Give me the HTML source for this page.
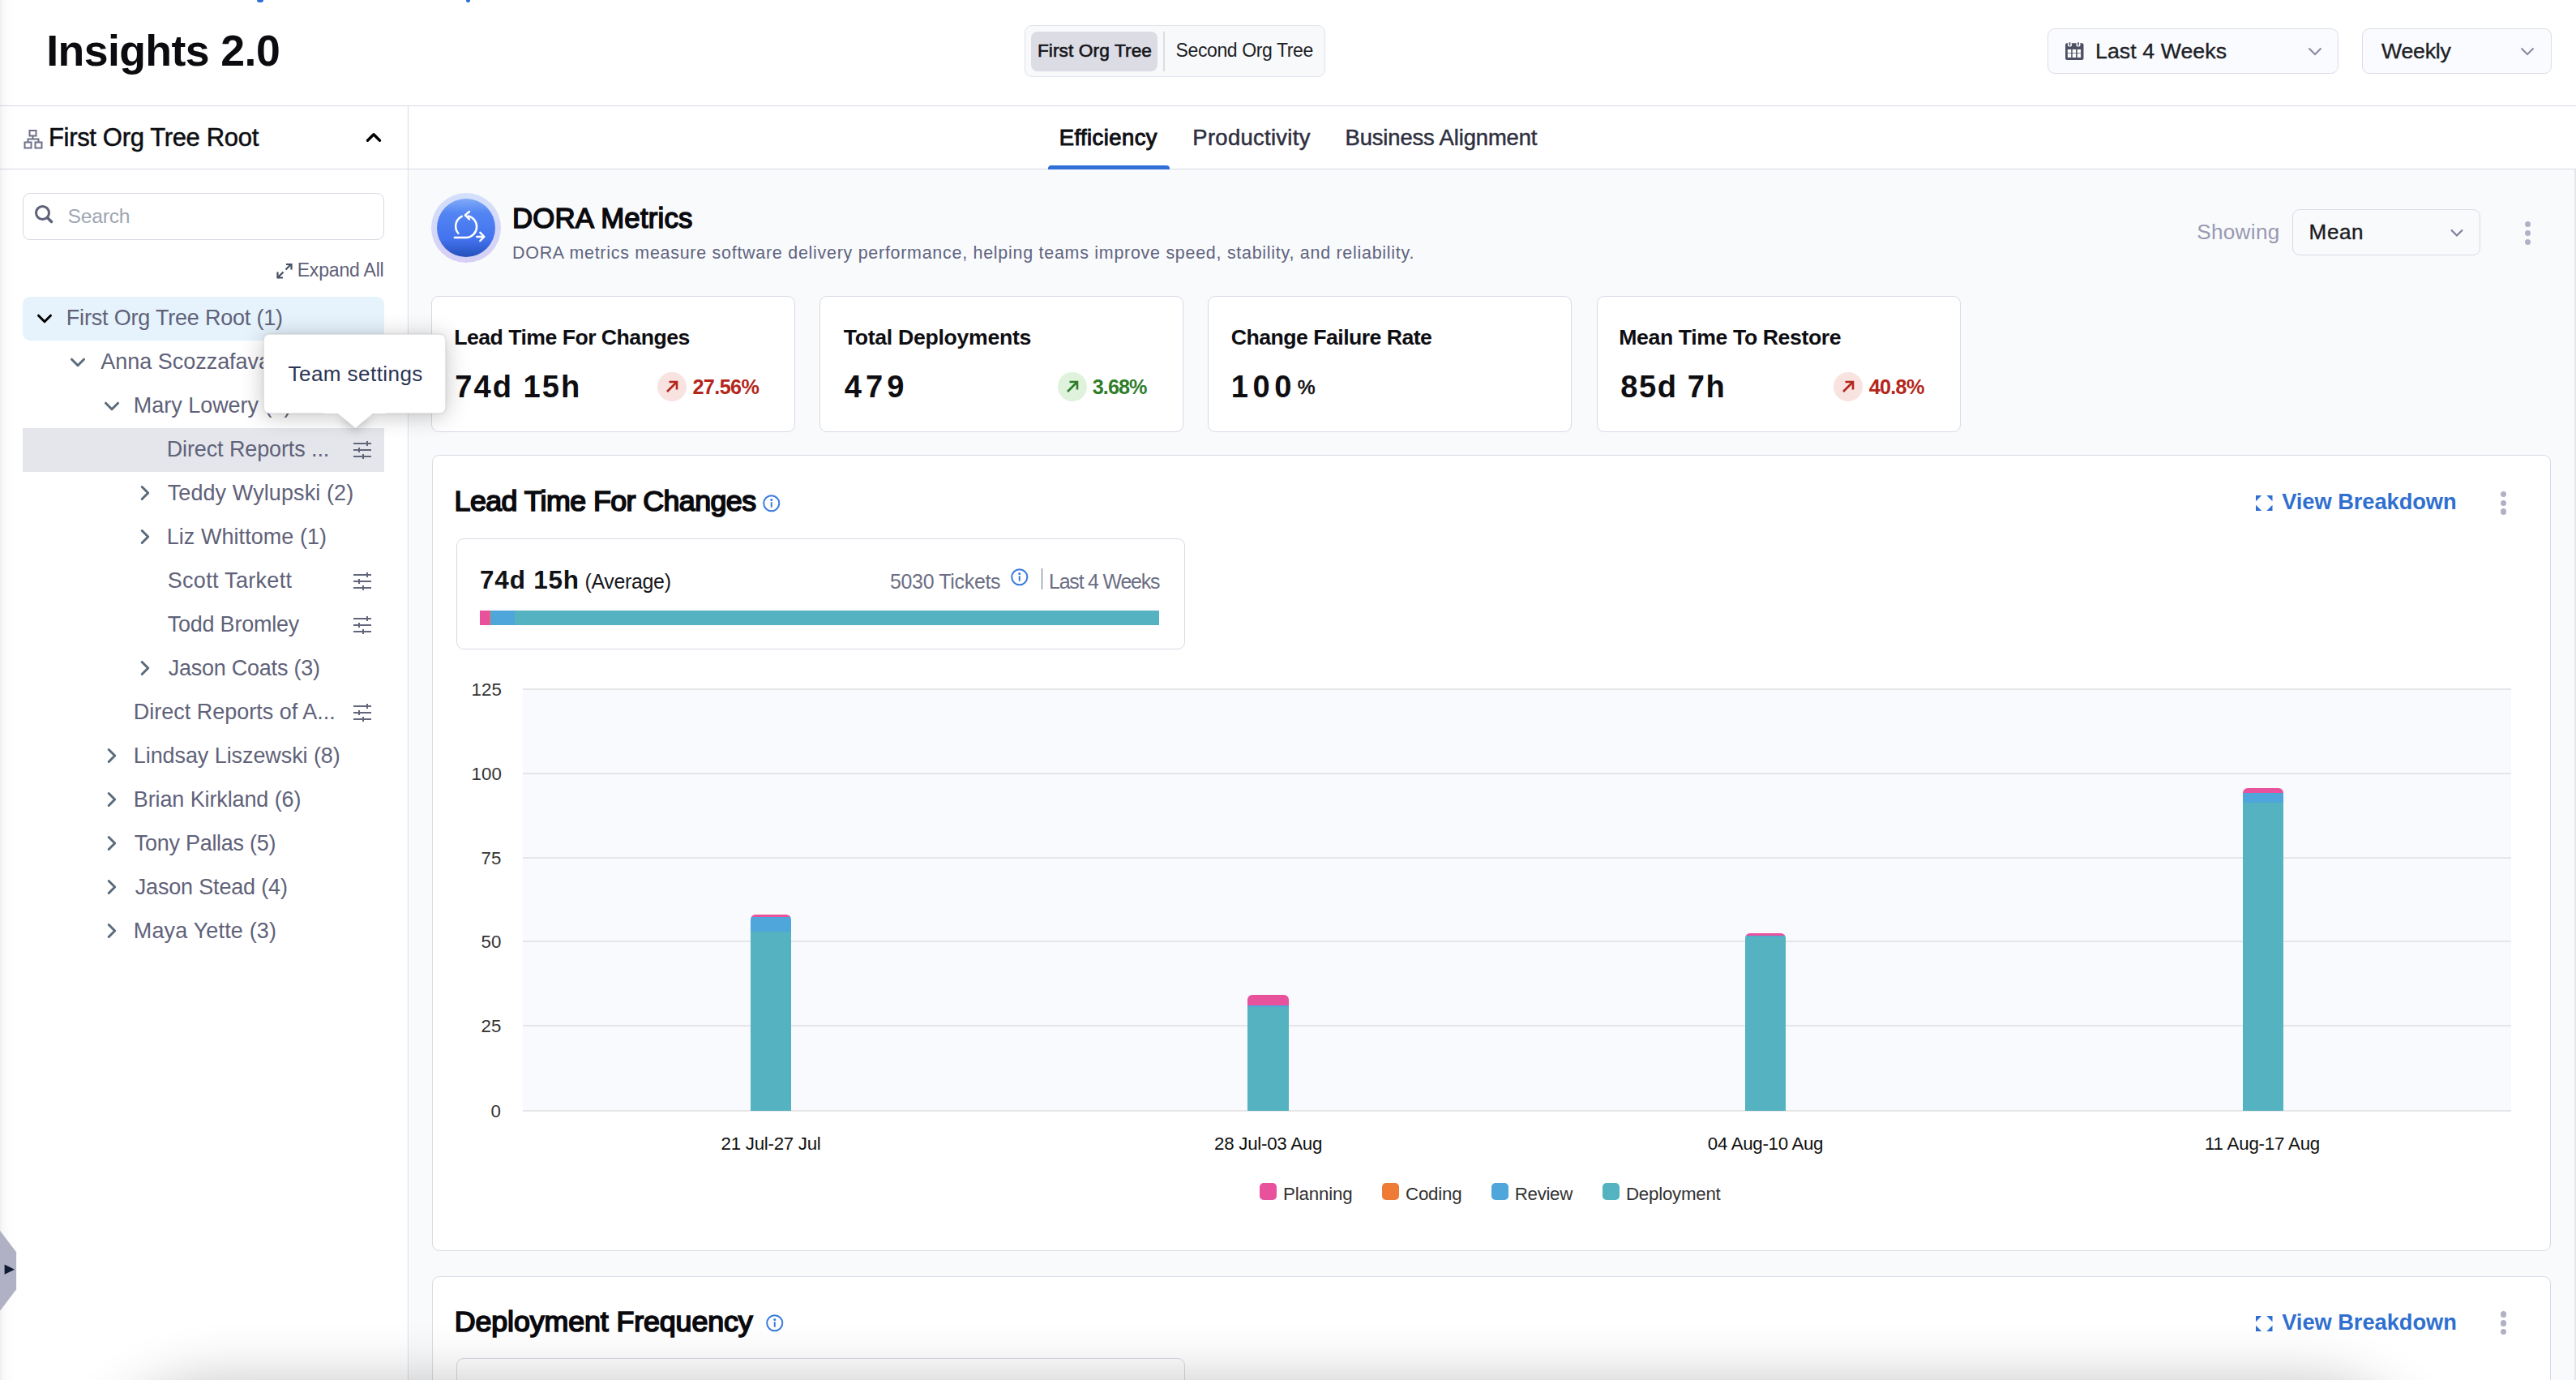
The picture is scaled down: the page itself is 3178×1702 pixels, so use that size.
<!DOCTYPE html>
<html><head><meta charset="utf-8"><style>
html,body{margin:0;padding:0;}
body{width:3178px;height:1702px;overflow:hidden;position:relative;font-family:"Liberation Sans",sans-serif;background:#fff;}
#r>div,#r>span,#r>svg{position:absolute;}
#r span{white-space:nowrap;line-height:1;}
#r svg{overflow:visible;}
</style></head><body><div id="r">
<div style="left:0.00px;top:0.00px;width:3178.00px;height:1702.00px;background:#fff"></div>
<div style="left:505.00px;top:209.00px;width:2673.00px;height:1493.00px;background:#f9fafc"></div>
<div style="left:0.00px;top:129.60px;width:3178.00px;height:1.20px;background:#d9dae5"></div>
<div style="left:0.00px;top:207.80px;width:505.00px;height:1.20px;background:#d9dae5"></div>
<div style="left:505.00px;top:207.80px;width:2673.00px;height:1.20px;background:#d9dae5"></div>
<div style="left:502.90px;top:131.00px;width:1.20px;height:1571.00px;background:#d9dae5"></div>
<div style="left:3176.00px;top:209.00px;width:2.00px;height:1493.00px;background:#e6e6eb"></div>
<span style="left:57.20px;top:36.00px;font-size:53.62px;color:#0c0c10;font-weight:bold;letter-spacing:-0.582px;">Insights 2.0</span>
<div style="left:317.00px;top:0.00px;width:8.00px;height:3.00px;background:#2e6fd6;border-radius:0 0 4px 4px"></div>
<div style="left:575.00px;top:0.00px;width:5.00px;height:3.00px;background:#2e6fd6;border-radius:0 0 3px 3px"></div>
<div style="left:1264.00px;top:31.40px;width:371.00px;height:64.00px;box-sizing:border-box;border:1px solid #e1e2ea;border-radius:9px;background:#f8f9fb"></div>
<div style="left:1272.00px;top:39.00px;width:155.60px;height:48.60px;background:#dcdce5;border-radius:8px"></div>
<div style="left:1434.50px;top:39.00px;width:2.00px;height:48.60px;background:#dcdde4"></div>
<span style="left:1279.90px;top:50.90px;font-size:22.75px;color:#15161a;letter-spacing:0.062px;-webkit-text-stroke:0.6px #15161a;">First Org Tree</span>
<span style="left:1450.60px;top:50.90px;font-size:23.04px;color:#1d1f26;letter-spacing:-0.414px;">Second Org Tree</span>
<span style="left:1306.70px;top:156.10px;font-size:27.39px;color:#0f1013;letter-spacing:0.467px;-webkit-text-stroke:1.0px #0f1013;">Efficiency</span>
<span style="left:1471.30px;top:156.10px;font-size:27.39px;color:#2e3040;letter-spacing:0.327px;-webkit-text-stroke:0.5px #2e3040;">Productivity</span>
<span style="left:1659.50px;top:156.10px;font-size:27.39px;color:#2e3040;letter-spacing:-0.118px;-webkit-text-stroke:0.5px #2e3040;">Business Alignment</span>
<div style="left:1293.20px;top:204.00px;width:149.50px;height:5.00px;background:#2f6fd6;border-radius:4px 4px 0 0"></div>
<div style="left:2526.00px;top:35.30px;width:359.00px;height:56.00px;box-sizing:border-box;border:1px solid #dcdde7;border-radius:9px;background:#fafbfe"></div>
<svg style="left:2546.00px;top:50.00px;" width="26" height="26" viewBox="0 0 26 26"><rect x="2" y="3.3" width="22.5" height="20.6" rx="2" fill="#4d5062"/><rect x="4.8" y="10.9" width="4.4" height="4.4" fill="#fff"/><rect x="10.7" y="10.9" width="4.4" height="4.4" fill="#fff"/><rect x="16.7" y="10.9" width="4.4" height="4.4" fill="#fff"/><rect x="4.8" y="16" width="4.4" height="4.9" fill="#fff"/><rect x="10.7" y="16" width="4.4" height="4.9" fill="#fff"/><rect x="16.7" y="16" width="4.4" height="4.9" fill="#fff"/><circle cx="7.5" cy="5" r="2.6" fill="#fafbfe"/><circle cx="18" cy="5" r="2.6" fill="#fafbfe"/><rect x="6.7" y="2" width="1.6" height="4.5" rx="0.8" fill="#4d5062"/><rect x="17.2" y="2" width="1.6" height="4.5" rx="0.8" fill="#4d5062"/></svg>
<span style="left:2585.00px;top:50.00px;font-size:26.67px;color:#1e1f26;letter-spacing:0.091px;-webkit-text-stroke:0.4px #1e1f26;">Last 4 Weeks</span>
<svg style="left:2846.00px;top:56.00px;" width="20" height="14" viewBox="0 0 20 14"><path d="M2.5 3.5 L10 11 L17.5 3.5" fill="none" stroke="#8b8ca6" stroke-width="2.2"/></svg>
<div style="left:2914.00px;top:35.30px;width:233.60px;height:56.00px;box-sizing:border-box;border:1px solid #dcdde7;border-radius:9px;background:#fafbfe"></div>
<span style="left:2938.00px;top:50.00px;font-size:26.67px;color:#1e1f26;letter-spacing:-0.200px;-webkit-text-stroke:0.4px #1e1f26;">Weekly</span>
<svg style="left:3108.00px;top:56.00px;" width="20" height="14" viewBox="0 0 20 14"><path d="M2.5 3.5 L10 11 L17.5 3.5" fill="none" stroke="#8b8ca6" stroke-width="2.2"/></svg>
<div style="left:0.00px;top:0.00px;width:20.00px;height:1702.00px;background:linear-gradient(to right, rgba(0,0,0,0.065), rgba(0,0,0,0.035) 12%, rgba(0,0,0,0.015) 40%, rgba(0,0,0,0.004) 75%, rgba(0,0,0,0))"></div>
<svg style="left:28.00px;top:159.00px;" width="26" height="26" viewBox="0 0 26 26"><g fill="none" stroke="#6e7088" stroke-width="2"><rect x="8.5" y="2" width="8" height="6.5"/><rect x="2.5" y="16.5" width="8" height="7"/><rect x="15.5" y="16.5" width="8" height="7"/><path d="M12.5 8.5V12.5M6.5 16.5V12.5H19.5V16.5"/></g></svg>
<span style="left:60.00px;top:154.40px;font-size:31.01px;color:#0d0e12;letter-spacing:-0.333px;-webkit-text-stroke:0.5px #0d0e12;">First Org Tree Root</span>
<svg style="left:449.70px;top:161.00px;" width="22" height="16" viewBox="0 0 22 16"><path d="M3.5 12.3 L11 4.8 L18.5 12.3" fill="none" stroke="#000" stroke-width="3.4" stroke-linecap="round" stroke-linejoin="round"/></svg>
<div style="left:28.40px;top:238.20px;width:445.20px;height:57.40px;box-sizing:border-box;border:1px solid #d8d9e3;border-radius:9px;background:#fff"></div>
<svg style="left:40.00px;top:250.00px;" width="28" height="28" viewBox="0 0 28 28"><circle cx="12.5" cy="12.5" r="8" fill="none" stroke="#5e6178" stroke-width="3"/><path d="M18.5 18.5 L23.5 23.5" stroke="#5e6178" stroke-width="3.5" stroke-linecap="round"/></svg>
<span style="left:83.60px;top:254.70px;font-size:24.64px;color:#9fa6b3;letter-spacing:-0.240px;">Search</span>
<svg style="left:340.00px;top:323.00px;" width="22" height="22" viewBox="0 0 22 22"><g fill="none" stroke="#434e60" stroke-width="2.2"><path d="M12.5 9.5 L19 3"/><path d="M13 3 H19.5 V9.5"/><path d="M9.5 12.5 L3 19"/><path d="M2.5 12.5 V19.5 H9"/></g></svg>
<span style="left:366.70px;top:321.90px;font-size:23.04px;color:#5e6178;letter-spacing:-0.200px;">Expand All</span>
<div style="left:28.00px;top:366.00px;width:446.00px;height:54.00px;background:#e6f3fc;border-radius:9px"></div>
<div style="left:28.00px;top:528.00px;width:446.00px;height:54.00px;background:#e4e6ec"></div>
<span style="left:81.80px;top:379.00px;font-size:26.96px;color:#5f6279;letter-spacing:-0.173px;">First Org Tree Root (1)</span>
<svg style="left:43.00px;top:385.20px;" width="24" height="16" viewBox="0 0 24 16"><path d="M4.5 4.2 L12 11.7 L19.5 4.2" fill="none" stroke="#000" stroke-width="3" stroke-linecap="round" stroke-linejoin="round"/></svg>
<span style="left:124.30px;top:433.00px;font-size:26.96px;color:#5f6279;">Anna Scozzafava (7)</span>
<svg style="left:83.50px;top:439.20px;" width="24" height="16" viewBox="0 0 24 16"><path d="M4.5 4.2 L12 11.7 L19.5 4.2" fill="none" stroke="#5b6b7b" stroke-width="3" stroke-linecap="round" stroke-linejoin="round"/></svg>
<span style="left:164.80px;top:487.00px;font-size:26.96px;color:#5f6279;">Mary Lowery (6)</span>
<svg style="left:126.00px;top:493.20px;" width="24" height="16" viewBox="0 0 24 16"><path d="M4.5 4.2 L12 11.7 L19.5 4.2" fill="none" stroke="#5b6b7b" stroke-width="3" stroke-linecap="round" stroke-linejoin="round"/></svg>
<span style="left:205.70px;top:541.00px;font-size:26.96px;color:#5f6279;letter-spacing:-0.094px;">Direct Reports ...</span>
<svg style="left:434.00px;top:543.80px;" width="26" height="24" viewBox="0 0 26 24"><g stroke="#62667a" stroke-width="2"><path d="M2 3H24M2 11H24M2 19H24"/><path d="M19 0V6M9 8V14M14 16V22"/></g></svg>
<span style="left:206.70px;top:595.00px;font-size:26.96px;color:#5f6279;letter-spacing:0.118px;">Teddy Wylupski (2)</span>
<svg style="left:170.90px;top:596.30px;" width="16" height="24" viewBox="0 0 16 24"><path d="M4.2 4.5 L11.7 12 L4.2 19.5" fill="none" stroke="#5b6b7b" stroke-width="3" stroke-linecap="round" stroke-linejoin="round"/></svg>
<span style="left:205.70px;top:649.00px;font-size:26.96px;color:#5f6279;letter-spacing:0.080px;">Liz Whittome (1)</span>
<svg style="left:170.90px;top:650.30px;" width="16" height="24" viewBox="0 0 16 24"><path d="M4.2 4.5 L11.7 12 L4.2 19.5" fill="none" stroke="#5b6b7b" stroke-width="3" stroke-linecap="round" stroke-linejoin="round"/></svg>
<span style="left:206.70px;top:703.00px;font-size:26.96px;color:#5f6279;letter-spacing:0.333px;">Scott Tarkett</span>
<svg style="left:434.00px;top:705.80px;" width="26" height="24" viewBox="0 0 26 24"><g stroke="#62667a" stroke-width="2"><path d="M2 3H24M2 11H24M2 19H24"/><path d="M19 0V6M9 8V14M14 16V22"/></g></svg>
<span style="left:206.70px;top:757.00px;font-size:26.96px;color:#5f6279;letter-spacing:-0.200px;">Todd Bromley</span>
<svg style="left:434.00px;top:759.80px;" width="26" height="24" viewBox="0 0 26 24"><g stroke="#62667a" stroke-width="2"><path d="M2 3H24M2 11H24M2 19H24"/><path d="M19 0V6M9 8V14M14 16V22"/></g></svg>
<span style="left:207.70px;top:811.00px;font-size:26.96px;color:#5f6279;letter-spacing:-0.214px;">Jason Coats (3)</span>
<svg style="left:170.90px;top:812.30px;" width="16" height="24" viewBox="0 0 16 24"><path d="M4.2 4.5 L11.7 12 L4.2 19.5" fill="none" stroke="#5b6b7b" stroke-width="3" stroke-linecap="round" stroke-linejoin="round"/></svg>
<span style="left:164.80px;top:865.00px;font-size:26.96px;color:#5f6279;letter-spacing:0.010px;">Direct Reports of A...</span>
<svg style="left:434.00px;top:867.80px;" width="26" height="24" viewBox="0 0 26 24"><g stroke="#62667a" stroke-width="2"><path d="M2 3H24M2 11H24M2 19H24"/><path d="M19 0V6M9 8V14M14 16V22"/></g></svg>
<span style="left:164.80px;top:919.00px;font-size:26.96px;color:#5f6279;letter-spacing:-0.060px;">Lindsay Liszewski (8)</span>
<svg style="left:130.00px;top:920.30px;" width="16" height="24" viewBox="0 0 16 24"><path d="M4.2 4.5 L11.7 12 L4.2 19.5" fill="none" stroke="#5b6b7b" stroke-width="3" stroke-linecap="round" stroke-linejoin="round"/></svg>
<span style="left:164.80px;top:973.00px;font-size:26.96px;color:#5f6279;letter-spacing:-0.094px;">Brian Kirkland (6)</span>
<svg style="left:130.00px;top:974.30px;" width="16" height="24" viewBox="0 0 16 24"><path d="M4.2 4.5 L11.7 12 L4.2 19.5" fill="none" stroke="#5b6b7b" stroke-width="3" stroke-linecap="round" stroke-linejoin="round"/></svg>
<span style="left:165.80px;top:1027.00px;font-size:26.96px;color:#5f6279;letter-spacing:-0.257px;">Tony Pallas (5)</span>
<svg style="left:130.00px;top:1028.30px;" width="16" height="24" viewBox="0 0 16 24"><path d="M4.2 4.5 L11.7 12 L4.2 19.5" fill="none" stroke="#5b6b7b" stroke-width="3" stroke-linecap="round" stroke-linejoin="round"/></svg>
<span style="left:166.80px;top:1081.00px;font-size:26.96px;color:#5f6279;letter-spacing:-0.157px;">Jason Stead (4)</span>
<svg style="left:130.00px;top:1082.30px;" width="16" height="24" viewBox="0 0 16 24"><path d="M4.2 4.5 L11.7 12 L4.2 19.5" fill="none" stroke="#5b6b7b" stroke-width="3" stroke-linecap="round" stroke-linejoin="round"/></svg>
<span style="left:164.80px;top:1135.00px;font-size:26.96px;color:#5f6279;letter-spacing:0.185px;">Maya Yette (3)</span>
<svg style="left:130.00px;top:1136.30px;" width="16" height="24" viewBox="0 0 16 24"><path d="M4.2 4.5 L11.7 12 L4.2 19.5" fill="none" stroke="#5b6b7b" stroke-width="3" stroke-linecap="round" stroke-linejoin="round"/></svg>
<svg style="left:0.00px;top:1517.00px;" width="22" height="100" viewBox="0 0 22 100"><path d="M0 0.8 L20.1 27.3 V73.2 L0 99.7 Z" fill="#b0b1c4"/><path d="M5.6 42.6 L18 48.7 L5.6 54.7 Z" fill="#0f1a33"/></svg>
<svg style="left:530.00px;top:236.00px;" width="90" height="90" viewBox="0 0 90 90"><defs><linearGradient id="ring" x1="0" y1="0" x2="0" y2="1"><stop offset="0" stop-color="#d4e0fb"/><stop offset="1" stop-color="#d6cff6"/></linearGradient><linearGradient id="core" x1="0" y1="0" x2="0" y2="1"><stop offset="0" stop-color="#80aaf8"/><stop offset="0.25" stop-color="#5285f3"/><stop offset="0.7" stop-color="#4272ee"/><stop offset="1" stop-color="#2550bb"/></linearGradient></defs><circle cx="45" cy="45" r="43" fill="url(#ring)"/><circle cx="45" cy="45" r="36" fill="url(#core)"/><g fill="none" stroke="#fff" stroke-width="2.5" stroke-linecap="round" stroke-linejoin="round"><path d="M39.8 30.8 A13.5 13.5 0 0 0 35.4 51.7"/><path d="M47.6 30.4 A13.5 13.5 0 0 1 46 57 H30.8"/><path d="M49 25 L43.8 29.4 L49 34.4"/><path d="M58.3 56 H67"/><path d="M62.4 50.8 L67.3 56 L62.4 61"/></g></svg>
<span style="left:632.00px;top:252.30px;font-size:34.78px;color:#0a0a0e;letter-spacing:0.200px;-webkit-text-stroke:1.5px #0a0a0e;">DORA Metrics</span>
<span style="left:632.00px;top:302.40px;font-size:21.45px;color:#60647f;letter-spacing:0.738px;">DORA metrics measure software delivery performance, helping teams improve speed, stability, and reliability.</span>
<span style="left:2710.20px;top:273.00px;font-size:26.09px;color:#9899b3;letter-spacing:0.333px;">Showing</span>
<div style="left:2827.70px;top:258.40px;width:232.60px;height:57.00px;box-sizing:border-box;border:1px solid #d9dae5;border-radius:9px;background:#f9fafc"></div>
<span style="left:2848.60px;top:273.00px;font-size:26.09px;color:#1b1c22;letter-spacing:0.600px;-webkit-text-stroke:0.4px #1b1c22;">Mean</span>
<svg style="left:3021.00px;top:279.00px;" width="20" height="16" viewBox="0 0 20 16"><path d="M3 4.5 L10 11.5 L17 4.5" fill="none" stroke="#7e7f9c" stroke-width="2.2"/></svg>
<div style="left:3114.80px;top:272.70px;width:7.40px;height:7.40px;background:#b1b1c6;border-radius:50%"></div>
<div style="left:3114.80px;top:283.70px;width:7.40px;height:7.40px;background:#b1b1c6;border-radius:50%"></div>
<div style="left:3114.80px;top:294.50px;width:7.40px;height:7.40px;background:#b1b1c6;border-radius:50%"></div>
<div style="left:532.40px;top:365.00px;width:449.00px;height:167.50px;box-sizing:border-box;border:1px solid #d9dae5;border-radius:9px;background:#fff"></div>
<span style="left:560.20px;top:402.70px;font-size:26.67px;color:#0e0e12;font-weight:bold;letter-spacing:-0.530px;">Lead Time For Changes</span>
<span style="left:561.20px;top:457.80px;font-size:38.12px;color:#0e0e12;font-weight:bold;letter-spacing:2.033px;">74d 15h</span>
<div style="left:810.70px;top:459.40px;width:36.00px;height:36.00px;background:#f9e3e1;border-radius:50%"></div>
<svg style="left:810.70px;top:459.40px;" width="36" height="36" viewBox="0 0 36 36"><g fill="none" stroke="#b4261b" stroke-width="2.6"><path d="M12 24 L23.5 12.5"/><path d="M14.5 12 H24 V21.5"/></g></svg>
<span style="left:854.40px;top:464.80px;font-size:25.22px;color:#b4261b;font-weight:bold;letter-spacing:-0.600px;">27.56%</span>
<div style="left:1011.00px;top:365.00px;width:449.00px;height:167.50px;box-sizing:border-box;border:1px solid #d9dae5;border-radius:9px;background:#fff"></div>
<span style="left:1040.80px;top:402.70px;font-size:26.67px;color:#0e0e12;font-weight:bold;letter-spacing:-0.312px;">Total Deployments</span>
<span style="left:1041.80px;top:457.80px;font-size:38.12px;color:#0e0e12;font-weight:bold;letter-spacing:5.000px;">479</span>
<div style="left:1305.00px;top:459.40px;width:36.00px;height:36.00px;background:#dff3dc;border-radius:50%"></div>
<svg style="left:1305.00px;top:459.40px;" width="36" height="36" viewBox="0 0 36 36"><g fill="none" stroke="#2f7d2b" stroke-width="2.6"><path d="M12 24 L23.5 12.5"/><path d="M14.5 12 H24 V21.5"/></g></svg>
<span style="left:1347.80px;top:464.80px;font-size:25.22px;color:#2f7d2b;font-weight:bold;letter-spacing:-0.950px;">3.68%</span>
<div style="left:1490.00px;top:365.00px;width:449.00px;height:167.50px;box-sizing:border-box;border:1px solid #d9dae5;border-radius:9px;background:#fff"></div>
<span style="left:1518.80px;top:402.70px;font-size:26.67px;color:#0e0e12;font-weight:bold;letter-spacing:-0.533px;">Change Failure Rate</span>
<span style="left:1518.80px;top:457.80px;font-size:38.12px;color:#0e0e12;font-weight:bold;letter-spacing:5.500px;">100</span>
<div style="left:1969.50px;top:365.00px;width:449.00px;height:167.50px;box-sizing:border-box;border:1px solid #d9dae5;border-radius:9px;background:#fff"></div>
<span style="left:1997.30px;top:402.70px;font-size:26.67px;color:#0e0e12;font-weight:bold;letter-spacing:-0.400px;">Mean Time To Restore</span>
<span style="left:1999.30px;top:457.80px;font-size:38.12px;color:#0e0e12;font-weight:bold;letter-spacing:1.560px;">85d 7h</span>
<div style="left:2262.00px;top:459.40px;width:36.00px;height:36.00px;background:#f9e3e1;border-radius:50%"></div>
<svg style="left:2262.00px;top:459.40px;" width="36" height="36" viewBox="0 0 36 36"><g fill="none" stroke="#b4261b" stroke-width="2.6"><path d="M12 24 L23.5 12.5"/><path d="M14.5 12 H24 V21.5"/></g></svg>
<span style="left:2305.80px;top:464.80px;font-size:25.22px;color:#b4261b;font-weight:bold;letter-spacing:-0.750px;">40.8%</span>
<span style="left:1600.70px;top:466.00px;font-size:24.64px;color:#0e0e12;-webkit-text-stroke:0.6px #0e0e12;">%</span>
<div style="left:532.60px;top:561.10px;width:2614.00px;height:982.00px;box-sizing:border-box;border:1px solid #d9dae5;border-radius:9px;background:#fff"></div>
<span style="left:560.60px;top:601.40px;font-size:35.80px;color:#0a0a0e;letter-spacing:-0.580px;-webkit-text-stroke:1.7px #0a0a0e;">Lead Time For Changes</span>
<svg style="left:941.00px;top:609.50px;" width="21.5" height="21.5" viewBox="0 0 21.5 21.5"><circle cx="10.75" cy="10.75" r="9.55" fill="none" stroke="#3a7bdc" stroke-width="2"/><circle cx="10.75" cy="6.45" r="1.5" fill="#3a7bdc"/><path d="M10.75 9.245V15.695" stroke="#3a7bdc" stroke-width="2"/></svg>
<svg style="left:2783.00px;top:610.90px;" width="21" height="19" viewBox="0 0 21 19"><g fill="#2f6fcf"><path d="M0 0H7.2L0 7.2Z"/><path d="M20.5 0H13.3L20.5 7.2Z"/><path d="M0 19H7.2L0 11.8Z"/><path d="M20.5 19H13.3L20.5 11.8Z"/></g></svg>
<div style="left:3084.70px;top:605.80px;width:7.40px;height:7.40px;background:#b1b1c6;border-radius:50%"></div>
<div style="left:3084.70px;top:616.60px;width:7.40px;height:7.40px;background:#b1b1c6;border-radius:50%"></div>
<div style="left:3084.70px;top:627.20px;width:7.40px;height:7.40px;background:#b1b1c6;border-radius:50%"></div>
<span style="left:2815.20px;top:604.90px;font-size:27.25px;color:#2f6fcf;font-weight:bold;letter-spacing:-0.046px;">View Breakdown</span>
<div style="left:562.60px;top:663.50px;width:899.00px;height:137.30px;box-sizing:border-box;border:1px solid #d9dae5;border-radius:9px;background:#fff"></div>
<span style="left:592.00px;top:699.50px;font-size:31.45px;color:#111216;font-weight:bold;letter-spacing:0.833px;">74d 15h</span>
<span style="left:721.40px;top:704.50px;font-size:24.93px;color:#16171c;letter-spacing:-0.300px;">(Average)</span>
<span style="left:1098.00px;top:704.50px;font-size:24.93px;color:#6b6e84;letter-spacing:-0.309px;">5030 Tickets</span>
<svg style="left:1247.40px;top:700.80px;" width="21.5" height="21.5" viewBox="0 0 21.5 21.5"><circle cx="10.75" cy="10.75" r="9.55" fill="none" stroke="#3a7bdc" stroke-width="2"/><circle cx="10.75" cy="6.45" r="1.5" fill="#3a7bdc"/><path d="M10.75 9.245V15.695" stroke="#3a7bdc" stroke-width="2"/></svg>
<div style="left:1284.80px;top:701.00px;width:1.50px;height:26.00px;background:#6b6e84"></div>
<span style="left:1294.00px;top:704.50px;font-size:24.93px;color:#6b6e84;letter-spacing:-1.182px;">Last 4 Weeks</span>
<div style="left:592.30px;top:752.90px;width:11.40px;height:18.60px;background:#e8519b"></div>
<div style="left:603.70px;top:752.90px;width:1.20px;height:18.60px;background:#ee7b36"></div>
<div style="left:604.90px;top:752.90px;width:30.40px;height:18.60px;background:#4fa6db"></div>
<div style="left:635.30px;top:752.90px;width:795.10px;height:18.60px;background:#55b2c0"></div>
<div style="left:645.00px;top:850.00px;width:2453.00px;height:520.00px;background:#f9fafd"></div>
<div style="left:645.00px;top:848.70px;width:2453.00px;height:2.00px;background:#e6e6e8"></div>
<span style="left:581.60px;top:839.70px;font-size:22.30px;color:#333333;">125</span>
<div style="left:645.00px;top:952.80px;width:2453.00px;height:2.00px;background:#e6e6e8"></div>
<span style="left:581.60px;top:943.80px;font-size:22.30px;color:#333333;">100</span>
<div style="left:645.00px;top:1056.80px;width:2453.00px;height:2.00px;background:#e6e6e8"></div>
<span style="left:593.60px;top:1047.80px;font-size:22.30px;color:#333333;">75</span>
<div style="left:645.00px;top:1160.20px;width:2453.00px;height:2.00px;background:#e6e6e8"></div>
<span style="left:593.60px;top:1151.20px;font-size:22.30px;color:#333333;">50</span>
<div style="left:645.00px;top:1264.30px;width:2453.00px;height:2.00px;background:#e6e6e8"></div>
<span style="left:593.60px;top:1255.30px;font-size:22.30px;color:#333333;">25</span>
<div style="left:645.00px;top:1369.20px;width:2453.00px;height:2.00px;background:#e6e6e8"></div>
<span style="left:605.60px;top:1360.20px;font-size:22.30px;color:#333333;">0</span>
<div style="left:925.70px;top:1128.00px;width:50.30px;height:242.00px;border-radius:6px 6px 0 0;overflow:hidden"><div style="position:absolute;left:0;top:0.00px;width:100%;height:2.50px;background:#e8519b"></div><div style="position:absolute;left:0;top:2.50px;width:100%;height:18.10px;background:#4fa6db"></div><div style="position:absolute;left:0;top:20.60px;width:100%;height:221.40px;background:#55b2c0"></div></div>
<div style="left:1539.40px;top:1226.70px;width:50.40px;height:143.30px;border-radius:6px 6px 0 0;overflow:hidden"><div style="position:absolute;left:0;top:0.00px;width:100%;height:13.10px;background:#e8519b"></div><div style="position:absolute;left:0;top:13.10px;width:100%;height:1.80px;background:#4fa6db"></div><div style="position:absolute;left:0;top:14.90px;width:100%;height:128.40px;background:#55b2c0"></div></div>
<div style="left:2153.40px;top:1151.20px;width:49.60px;height:218.80px;border-radius:6px 6px 0 0;overflow:hidden"><div style="position:absolute;left:0;top:0.00px;width:100%;height:2.80px;background:#e8519b"></div><div style="position:absolute;left:0;top:2.80px;width:100%;height:1.50px;background:#4fa6db"></div><div style="position:absolute;left:0;top:4.30px;width:100%;height:214.50px;background:#55b2c0"></div></div>
<div style="left:2767.20px;top:971.70px;width:49.80px;height:398.30px;border-radius:6px 6px 0 0;overflow:hidden"><div style="position:absolute;left:0;top:0.00px;width:100%;height:6.80px;background:#e8519b"></div><div style="position:absolute;left:0;top:6.80px;width:100%;height:11.20px;background:#4fa6db"></div><div style="position:absolute;left:0;top:18.00px;width:100%;height:380.30px;background:#55b2c0"></div></div>
<span style="left:889.60px;top:1400.00px;font-size:22.30px;color:#111111;letter-spacing:-0.267px;">21 Jul-27 Jul</span>
<span style="left:1498.00px;top:1400.00px;font-size:22.30px;color:#111111;letter-spacing:-0.250px;">28 Jul-03 Aug</span>
<span style="left:2106.80px;top:1400.00px;font-size:22.30px;color:#111111;letter-spacing:-0.300px;">04 Aug-10 Aug</span>
<span style="left:2720.00px;top:1400.00px;font-size:22.30px;color:#111111;letter-spacing:-0.200px;">11 Aug-17 Aug</span>
<div style="left:1554.00px;top:1459.30px;width:21.20px;height:21.20px;background:#e8519b;border-radius:5px"></div>
<span style="left:1583.00px;top:1461.50px;font-size:22.30px;color:#333333;letter-spacing:-0.171px;">Planning</span>
<div style="left:1704.70px;top:1459.30px;width:21.20px;height:21.20px;background:#ee7b36;border-radius:5px"></div>
<span style="left:1734.00px;top:1461.50px;font-size:22.30px;color:#333333;letter-spacing:-0.200px;">Coding</span>
<div style="left:1839.80px;top:1459.30px;width:21.20px;height:21.20px;background:#4fa6db;border-radius:5px"></div>
<span style="left:1868.80px;top:1461.50px;font-size:22.30px;color:#333333;letter-spacing:-0.320px;">Review</span>
<div style="left:1977.30px;top:1459.30px;width:21.20px;height:21.20px;background:#55b2c0;border-radius:5px"></div>
<span style="left:2006.00px;top:1461.50px;font-size:22.30px;color:#333333;letter-spacing:-0.244px;">Deployment</span>
<div style="left:532.60px;top:1573.50px;width:2614.00px;height:200.00px;box-sizing:border-box;border:1px solid #d9dae5;border-radius:9px;background:#fff"></div>
<span style="left:560.80px;top:1613.20px;font-size:35.80px;color:#0a0a0e;letter-spacing:-0.116px;-webkit-text-stroke:1.7px #0a0a0e;">Deployment Frequency</span>
<svg style="left:945.40px;top:1621.20px;" width="21.5" height="21.5" viewBox="0 0 21.5 21.5"><circle cx="10.75" cy="10.75" r="9.55" fill="none" stroke="#3a7bdc" stroke-width="2"/><circle cx="10.75" cy="6.45" r="1.5" fill="#3a7bdc"/><path d="M10.75 9.245V15.695" stroke="#3a7bdc" stroke-width="2"/></svg>
<svg style="left:2783.00px;top:1622.50px;" width="21" height="19" viewBox="0 0 21 19"><g fill="#2f6fcf"><path d="M0 0H7.2L0 7.2Z"/><path d="M20.5 0H13.3L20.5 7.2Z"/><path d="M0 19H7.2L0 11.8Z"/><path d="M20.5 19H13.3L20.5 11.8Z"/></g></svg>
<div style="left:3084.70px;top:1617.40px;width:7.40px;height:7.40px;background:#b1b1c6;border-radius:50%"></div>
<div style="left:3084.70px;top:1628.20px;width:7.40px;height:7.40px;background:#b1b1c6;border-radius:50%"></div>
<div style="left:3084.70px;top:1638.80px;width:7.40px;height:7.40px;background:#b1b1c6;border-radius:50%"></div>
<span style="left:2815.20px;top:1616.60px;font-size:27.25px;color:#2f6fcf;font-weight:bold;letter-spacing:-0.031px;">View Breakdown</span>
<div style="left:562.60px;top:1675.00px;width:899.00px;height:100.00px;box-sizing:border-box;border:1px solid #d9dae5;border-radius:9px;background:#fff"></div>
<div style="left:325px;top:412px;width:225.4px;height:98px;box-sizing:border-box;border:1px solid rgba(0,0,0,0.1);background:#fff;border-radius:7px;box-shadow:0 3px 28px rgba(0,0,0,0.24),0 0 3px rgba(0,0,0,0.1)"></div>
<svg style="left:410.00px;top:500.00px;filter:drop-shadow(0 4px 6px rgba(0,0,0,0.22))" width="58" height="34" viewBox="0 0 58 34"><path d="M7 10 L28.4 27.7 L49.8 10 Z" fill="#fff"/></svg>
<div style="left:400.00px;top:498.00px;width:76.00px;height:12.00px;background:#fff"></div>
<span style="left:355.50px;top:447.70px;font-size:26.09px;color:#2a3453;letter-spacing:0.417px;">Team settings</span>
<div style="left:120px;top:1722px;width:2870px;height:300px;border-radius:150px;box-shadow:0 0 70px 18px rgba(0,0,0,0.24)"></div>
</div></body></html>
